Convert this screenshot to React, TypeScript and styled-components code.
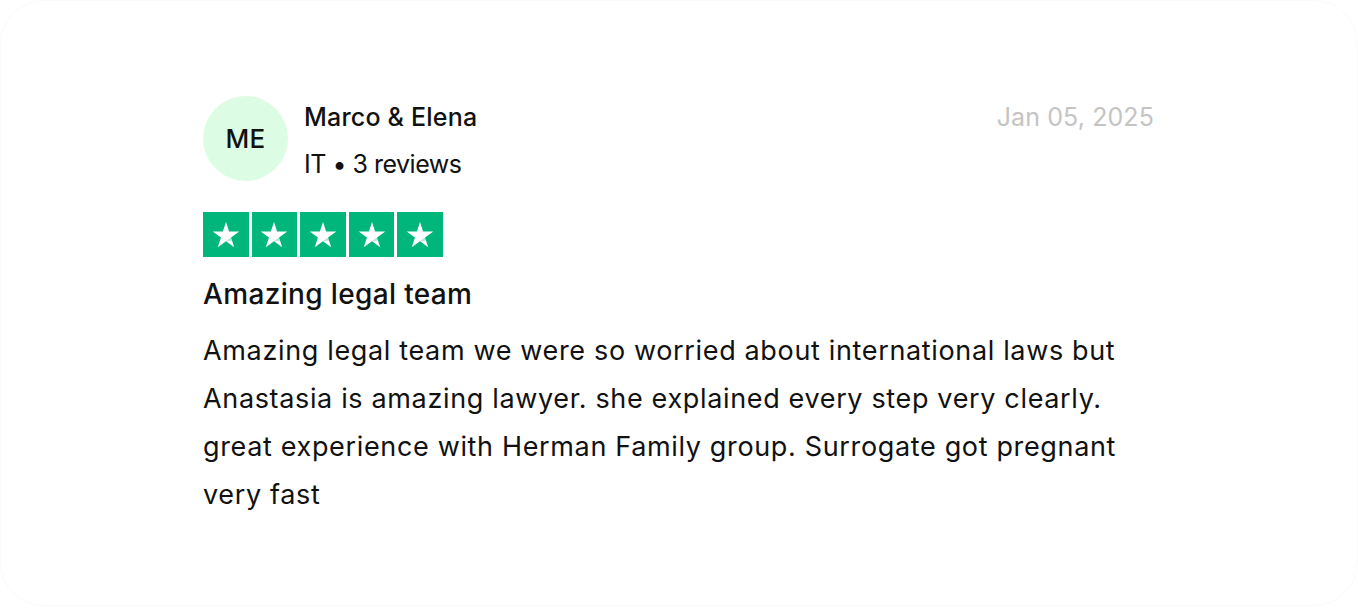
import styled, { createGlobalStyle } from 'styled-components';

const Global = createGlobalStyle`
    html, body {
        margin: 0;
        padding: 0;
        background: #ffffff;
    }
    body {
        font-family: Inter, "Noto Sans", sans-serif;
        color: #111111;
    }
`;

const Card = styled.div`
    box-sizing: border-box;
    width: 1358px;
    height: 606px;
    border: 1px solid #fafafa;
    border-radius: 44px;
    padding: 95px 203px 0 202px;
`;

const Header = styled.div`
    display: flex;
    align-items: flex-start;
`;

const Avatar = styled.div`
    width: 85px;
    height: 85px;
    border-radius: 50%;
    background: #dcfce4;
    display: flex;
    align-items: center;
    justify-content: center;
    font-size: 26px;
    font-weight: 500;
    letter-spacing: 0.3px;
    color: #111;
    flex-shrink: 0;
`;

const Who = styled.div`
    margin-left: 16px;
    flex: 1;
    display: flex;
    flex-direction: column;
`;

const Name = styled.div`
    font-size: 25px;
    line-height: 44px;
    font-weight: 500;
    letter-spacing: 0.2px;
    margin-top: -1px;
`;

const Meta = styled.div`
    font-size: 25px;
    line-height: 44px;
    letter-spacing: -0.5px;
    margin-top: 3px;
`;

const DateText = styled.div`
    font-size: 25px;
    line-height: 44px;
    color: #c4c4c4;
    letter-spacing: 0.1px;
    margin-top: -1px;
`;

const Stars = styled.div`
    display: flex;
    gap: 3px;
    margin-top: 26px;
`;

const StarBox = styled.div`
    width: 45.6px;
    height: 45px;
    background: #00b67a;
    display: flex;
    align-items: center;
    justify-content: center;
`;

const Title = styled.h3`
    margin: 19px 0 0 0;
    font-size: 28px;
    line-height: 36px;
    font-weight: 500;
    letter-spacing: 0.35px;
`;

const Body = styled.p`
    margin: 15px 0 0 0;
    font-size: 27px;
    line-height: 48px;
    letter-spacing: 0.65px;
    color: #111;
`;

const Star = () => (
    <svg width="32" height="32" viewBox="0 0 24 24">
        <path
            d="M12 2.2 L14.35 9.45 L21.95 9.45 L15.8 13.9 L18.15 21.15 L12 16.7 L5.85 21.15 L8.2 13.9 L2.05 9.45 L9.65 9.45 Z"
            fill="#ffffff"
        />
        <path d="M15.8 13.9 L16.55 16.2 L12 16.7 Z" fill="#00b67a" opacity="0.35" />
    </svg>
);

export default function App() {
    return (
        <>
            <Global />
            <Card>
                <Header>
                    <Avatar>ME</Avatar>
                    <Who>
                        <Name>Marco &amp; Elena</Name>
                        <Meta>IT • 3 reviews</Meta>
                    </Who>
                    <DateText>Jan 05, 2025</DateText>
                </Header>
                <Stars>
                    {[0, 1, 2, 3, 4].map((i) => (
                        <StarBox key={i}>
                            <Star />
                        </StarBox>
                    ))}
                </Stars>
                <Title>Amazing legal team</Title>
                <Body>
                    Amazing legal team we were so worried about international laws but Anastasia is amazing lawyer. she explained every step very clearly. great experience with Herman Family group. Surrogate got pregnant very fast
                </Body>
            </Card>
        </>
    );
}
